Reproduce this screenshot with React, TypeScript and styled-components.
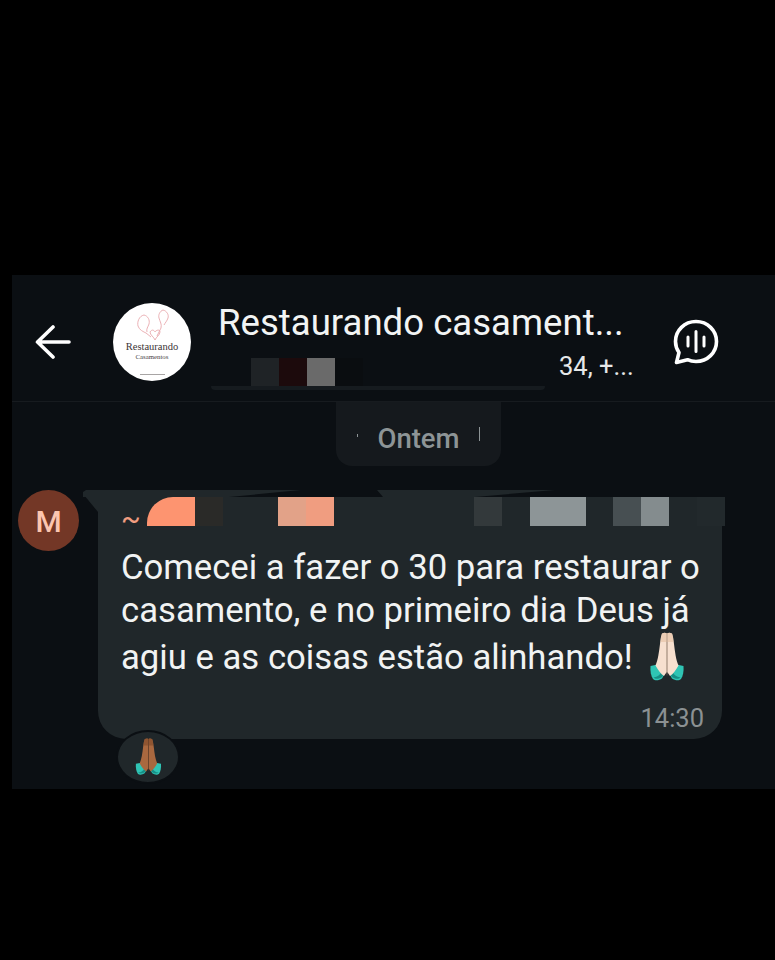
import React from "react";
import styled, { createGlobalStyle } from "styled-components";

const GlobalStyle = createGlobalStyle`
  html, body {
    margin: 0;
    padding: 0;
    background: #000;
  }
  body {
    font-family: Roboto, "Liberation Sans", sans-serif;
  }
`;

const Screen = styled.div`
  width: 775px;
  height: 960px;
  padding: 275px 0 0 12px;
  box-sizing: border-box;
  background: #000;
  overflow: hidden;
`;

const Panel = styled.div`
  height: 514px;
  background: #0b0f13;
  display: flex;
  flex-direction: column;
`;

const Header = styled.header`
  height: 127px;
  box-sizing: border-box;
  border-bottom: 1px solid #171b1f;
  display: flex;
  align-items: flex-start;
  padding-left: 23px;
`;

const BackButton = styled.button`
  width: 36px;
  height: 36px;
  margin-top: 49px;
  padding: 0;
  border: 0;
  background: none;
  color: #fff;
  display: flex;
`;

const GroupAvatar = styled.svg`
  width: 78px;
  height: 78px;
  margin: 28px 0 0 42px;
  flex: none;
`;

const TitleBlock = styled.div`
  width: 428px;
  margin-left: 15px;
  padding-top: 26px;
  position: relative;
`;

const Title = styled.div`
  color: #f2f4f4;
  font-size: 36.6px;
  line-height: 44px;
  padding-left: 12px;
  white-space: nowrap;
`;

const MemberRow = styled.div`
  display: flex;
  height: 28px;
  margin-top: 13px;
  padding-left: 45px;
`;

const Smudge = styled.div`
  height: 4px;
  width: 334px;
  margin-left: 5px;
  background: #161b1f;
  border-radius: 0 0 12px 12px;
`;

const Cell = styled.div<{ $w?: number; $c?: string; $round?: boolean }>`
  width: ${(p) => p.$w ?? 28}px;
  flex: none;
  background: ${(p) => p.$c ?? "transparent"};
  border-radius: ${(p) => (p.$round ? "26px 0 0 0" : "0")};
`;

const MemberTail = styled.span`
  position: absolute;
  left: 353px;
  top: 76px;
  color: #e6e8e9;
  font-size: 25.5px;
  line-height: 30px;
  white-space: nowrap;
`;

const VoiceButton = styled.button`
  width: 46px;
  height: 46px;
  margin: 44px 0 0 39px;
  padding: 0;
  border: 0;
  background: none;
  color: #fff;
  display: flex;
`;

const Conversation = styled.main`
  flex: 1;
  display: flex;
  flex-direction: column;
`;

const DateChip = styled.div`
  align-self: flex-start;
  width: 165px;
  height: 64px;
  margin-left: 324px;
  box-sizing: border-box;
  padding-top: 8px;
  background: #15191d;
  border-radius: 0 0 16px 16px;
  color: #8d9496;
  font-size: 27.5px;
  font-weight: 500;
  display: flex;
  align-items: center;
  justify-content: center;
  position: relative;
`;

const ChipTick = styled.i<{ $left: number; $h: number; $top: number }>`
  position: absolute;
  left: ${(p) => p.$left}px;
  top: ${(p) => p.$top}px;
  width: 1px;
  height: ${(p) => p.$h}px;
  background: #8d9496;
`;

const MessageRow = styled.div`
  display: flex;
  margin: 24px 0 0 6px;
`;

const SenderAvatar = styled.div`
  width: 61px;
  height: 61px;
  flex: none;
  padding-top: 1px;
  box-sizing: border-box;
  border-radius: 50%;
  background: #733726;
  color: #fcc6b0;
  font-size: 30px;
  font-weight: 500;
  display: flex;
  align-items: center;
  justify-content: center;
`;

const Bubble = styled.div`
  width: 624px;
  height: 242px;
  margin: 7px 0 0 19px;
  box-sizing: border-box;
  padding-left: 23px;
  background: #20272a;
  border-radius: 0 0 28px 28px;
  position: relative;
`;

const BubbleTop = styled.svg`
  position: absolute;
  left: -15px;
  top: -7px;
  width: 480px;
  height: 26px;
`;

const SenderRow = styled.div`
  display: flex;
  height: 29px;
  margin-right: -26px;
  position: relative;
`;

const Tilde = styled.span`
  width: 26px;
  flex: none;
  color: #f09d80;
  font-size: 29px;
  line-height: 44px;
`;

const MessageText = styled.p`
  margin: 20px 0 0;
  color: #f1f3f3;
  font-size: 34.7px;
  line-height: 43px;
  white-space: nowrap;
`;

const TimeStamp = styled.span`
  position: absolute;
  right: 18px;
  bottom: 6px;
  color: #8b9193;
  font-size: 25.5px;
  line-height: 30px;
`;

const Reaction = styled.div`
  position: absolute;
  left: 18px;
  top: 233px;
  width: 64px;
  height: 54px;
  box-sizing: border-box;
  border: 2px solid #0b0f13;
  border-radius: 50%;
  background: #20272a;
  display: flex;
  align-items: center;
  justify-content: center;
`;

const EmojiSvg = styled.svg<{ $h: number }>`
  height: ${(p) => p.$h}px;
  width: auto;
  display: block;
  overflow: visible;
`;

const InlineEmoji = styled.span`
  display: inline-block;
  height: 47px;
  margin-left: 15px;
  vertical-align: -10px;
`;

type HandsProps = {
  height: number;
  skin: string;
  shade: string;
};

// praying hands, drawn because the emoji font differs
const PrayingHands = ({ height, skin, shade }: HandsProps) => (
  <EmojiSvg $h={height} viewBox="0 0 38 50">
    <path d="M2.500 34c-.5 5 .5 10 2.500 13 2 2 6 1.500 9-.5l2-3.500-6.500-10.500z" fill="#2fc4b4" />
    <path d="M35.500 34c.5 5-.5 10-2.500 13-2 2-6 1.500-9-.5l-2-3.500 6.500-10.500z" fill="#2fc4b4" />
    <path d="M5.500 45.500c2 2 5.500 1.500 8.500-.5l1.500-2.500-2-2.500c-1 2.500-4 5-8 5.500z M32.500 45.500c-2 2-5.500 1.500-8.500-.5l-1.500-2.500 2-2.500c1 2.500 4 5 8 5.500z" fill="#178f86" />
    <path d="M14 1.500c1.500-1 3.500-1 4.700-.3V40l-2.700 4c-3-2-6-6-8.500-10.500C10 28 11 20 12 12c.4-4 1-8.500 2-10.500z" fill={skin} />
    <path d="M24 1.500c-1.500-1-3.500-1-4.700-.3V40l2.700 4c3-2 6-6 8.500-10.500C28 28 27 20 26 12c-.4-4-1-8.500-2-10.500z" fill={skin} />
    <path d="M14 1.500c1.500-1 3.500-1 4.700-.3V10h-6.200c.3-3 .7-6.500 1.500-8.700z M24 1.500c-1.500-1-3.500-1-4.700-.3V10h6.200c-.3-3-.7-6.500-1.500-8.700z" fill={shade} opacity="0.55" />
    <path d="M18.600 1h.8v39l-.4 4-.4-4z" fill={shade} opacity="0.8" />
  </EmojiSvg>
);

const senderCells = [
  { w: 48, c: "#fd9470", round: true },
  { c: "#2a2a28" },
  { w: 55 },
  { c: "#e2a288" },
  { c: "#f09d80" },
  { w: 140 },
  { c: "#33393b" },
  {},
  { w: 56, c: "#8d9597" },
  { w: 27 },
  { c: "#474f52" },
  { c: "#848c8e" },
  {},
  { c: "#22292c" },
];

export default function App() {
  return (
    <>
      <GlobalStyle />
      <Screen>
        <Panel>
          <Header>
            <BackButton aria-label="Voltar">
              <svg width="36" height="36" viewBox="0 0 36 36" fill="none" stroke="currentColor" strokeWidth="3.600" strokeLinecap="round" strokeLinejoin="round">
                <path d="M34 18H2.500M18 3L2.500 18 18 33" />
              </svg>
            </BackButton>
            <GroupAvatar viewBox="0 0 78 78">
              <circle cx="39" cy="39" r="39" fill="#fff" />
              <g fill="none" stroke="#e9a9ae" strokeWidth="0.900">
                <path d="M31 12c-5 1-7 7-6 11 1 4 6 6 8 7l5 4" />
                <path d="M31 12c4 1 6 5 5 9-1 3-3 5-2 8" />
                <path d="M50 7c-3 1-5 5-4 8 1 4 3 6 2 10l-4 8" />
                <path d="M50 7c4 1 6 5 5 8-1 3-3 5-4 7" />
                <path d="M37 29c2-3 4-2 5 0 1-2 5-3 5 0 0 3-4 5-5 8-1-3-5-5-5-8z" />
              </g>
              <text x="39" y="47" textAnchor="middle" fontFamily="'Liberation Serif', serif" fontSize="10.500" fill="#3c3436">Restaurando</text>
              <text x="39" y="56" textAnchor="middle" fontFamily="'Liberation Serif', serif" fontSize="6.800" fill="#4a4244">Casamentos</text>
              <rect x="27" y="71" width="25" height="1" fill="#a8a5a5" />
            </GroupAvatar>
            <TitleBlock>
              <Title>Restaurando casament...</Title>
              <MemberRow>
                <Cell $c="#1f2326" />
                <Cell $c="#1c0a0c" />
                <Cell $c="#6a6a6a" />
                <Cell $c="#0a0d10" />
              </MemberRow>
              <Smudge />
              <MemberTail>34, +...</MemberTail>
            </TitleBlock>
            <VoiceButton aria-label="Chat de voz">
              <svg width="46" height="46" viewBox="0 0 46 46" fill="none" stroke="currentColor" strokeLinecap="round" strokeLinejoin="round">
                <path strokeWidth="3.600" d="M23 2.500c11.500 0 20.500 9 20.500 20s-9 20-20.500 20c-3 0-6-.6-8.500-1.800L3.500 43.500l2.500-10C3.800 30.300 2.500 26.500 2.500 22.500 2.500 11.500 11.500 2.500 23 2.500z" />
                <path strokeWidth="3" d="M23 12.500v20M15 18v9M31 18v9" />
              </svg>
            </VoiceButton>
          </Header>
          <Conversation>
            <DateChip>
              Ontem
              <ChipTick $left={21} $top={32} $h={3} />
              <ChipTick $left={143} $top={25} $h={14} />
            </DateChip>
            <MessageRow>
              <SenderAvatar>M</SenderAvatar>
              <Bubble>
                <BubbleTop viewBox="0 0 480 26">
                  <path d="M3 0H218L146 7H0V2z" fill="#20272a" />
                  <path d="M1 5L15 22V5z" fill="#20272a" />
                  <path d="M294 0H472L392 7H300z" fill="#20272a" />
                </BubbleTop>
                <SenderRow>
                  <Tilde>~</Tilde>
                  {senderCells.map((cell, i) => (
                    <Cell key={i} $w={cell.w} $c={cell.c} $round={cell.round} />
                  ))}
                </SenderRow>
                <MessageText>
                  Comecei a fazer o 30 para restaurar o
                  <br />
                  casamento, e no primeiro dia Deus já
                  <br />
                  agiu e as coisas estão alinhando!
                  <InlineEmoji>
                    <PrayingHands height={50} skin="#f7e0cf" shade="#e3bd9f" />
                  </InlineEmoji>
                </MessageText>
                <TimeStamp>14:30</TimeStamp>
                <Reaction>
                  <PrayingHands height={38} skin="#a9683f" shade="#7a4526" />
                </Reaction>
              </Bubble>
            </MessageRow>
          </Conversation>
        </Panel>
      </Screen>
    </>
  );
}
